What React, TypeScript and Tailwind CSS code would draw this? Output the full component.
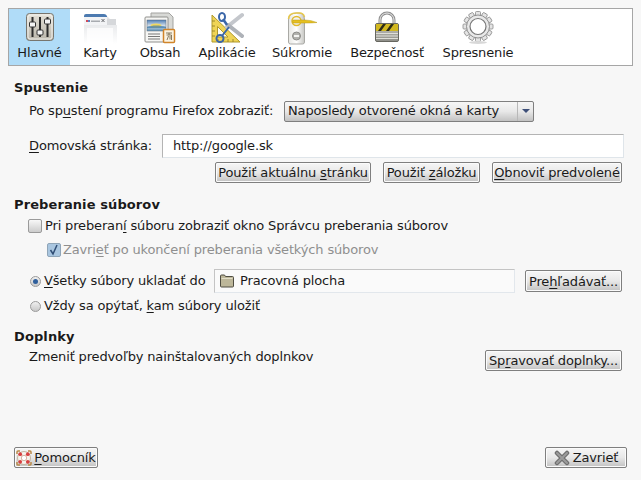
import React from 'react';

const btn =
  'flex items-center justify-center whitespace-nowrap rounded-[2px] border border-[#7f7f7f] bg-gradient-to-b from-[#f6f6f6] via-[#e8e8e8] to-[#c2c2c2] text-[13px] leading-none text-[#1a1a1a] shadow-[inset_0_0_0_1px_#fbfbfb]';

function MainIcon() {
  return (
    <svg width="32" height="32" viewBox="0 0 32 32">
      <defs>
        <linearGradient id="mainBg" x1="0" y1="0" x2="0" y2="1">
          <stop offset="0" stopColor="#e4e1d8" />
          <stop offset="1" stopColor="#b9b5aa" />
        </linearGradient>
      </defs>
      <rect x="2.500" y="1.500" width="27" height="27" rx="3" fill="url(#mainBg)" stroke="#77756e" />
      <rect x="4" y="3" width="24" height="24" rx="2" fill="none" stroke="#f3f2ee" />
      <path d="M8.500 5v20M16 5v20M23.500 5v20" stroke="#2b2b2b" strokeWidth="2" />
      <rect x="5.500" y="10" width="6" height="5" rx="1" fill="#f4f4f4" stroke="#333" />
      <rect x="13" y="18" width="6" height="5" rx="1" fill="#f4f4f4" stroke="#333" />
      <rect x="20.500" y="7" width="6" height="5" rx="1" fill="#f4f4f4" stroke="#333" />
    </svg>
  );
}

function TabsIcon() {
  return (
    <svg width="34" height="32" viewBox="0 0 34 32">
      <defs>
        <linearGradient id="tabFade" x1="0" y1="0" x2="0" y2="1">
          <stop offset="0" stopColor="#dfe1e4" />
          <stop offset="1" stopColor="#ffffff" />
        </linearGradient>
      </defs>
      <path d="M1 32V4h23l3 3v6h7v19z" fill="url(#tabFade)" />
      <path d="M1 4q0-2 2-2h18q2 0 3 2v1H1z" fill="#4c7ab0" />
      <rect x="1" y="5" width="23" height="8" fill="#f2f3f5" />
      <rect x="3" y="8" width="2" height="2" fill="#d04a5a" />
      <rect x="5" y="8" width="2" height="2" fill="#5a7fc0" />
      <rect x="8" y="8.500" width="9" height="1.500" fill="#a8abb0" />
      <path d="M18.500 7l3 3M21.500 7l-3 3" stroke="#66686c" strokeWidth="1" />
      <rect x="24" y="7" width="9" height="6" fill="#d6d8db" />
      <rect x="4" y="16" width="26" height="16" fill="#ffffff" opacity="0.75" />
    </svg>
  );
}

function ContentIcon() {
  return (
    <svg width="34" height="32" viewBox="0 0 34 32">
      <defs>
        <linearGradient id="sky" x1="0" y1="0" x2="0" y2="1">
          <stop offset="0" stopColor="#4d7fb8" />
          <stop offset="0.5" stopColor="#cfdbe6" />
          <stop offset="1" stopColor="#5f93b8" />
        </linearGradient>
      </defs>
      <path d="M8 1h18l4 4v21H8z" fill="#d8d9d6" stroke="#a3a3a0" />
      <rect x="2" y="5" width="23" height="25" rx="1" fill="#f6f6f4" stroke="#8f8f8c" />
      <rect x="4" y="8" width="19" height="11" fill="url(#sky)" stroke="#5f6a75" strokeWidth="0.500" />
      <ellipse cx="13" cy="13.500" rx="5.500" ry="2" fill="#f0d860" />
      <path d="M4 15c5-2 13-2 19 0v1H4z" fill="#3f79a8" opacity="0.7" />
      <path d="M5 22h12M5 24.500h12M5 27h12" stroke="#777" strokeWidth="1" />
      <rect x="20.500" y="17.500" width="11" height="13" rx="1" fill="#fbf3e2" stroke="#d0842a" strokeWidth="1.500" />
      <path d="M23 21h6M26 21v2M23.500 23h5v5M25.500 24l-1.500 4M27 24v3.500" stroke="#6a5a40" strokeWidth="0.800" fill="none" />
    </svg>
  );
}

function AppsIcon() {
  return (
    <svg width="34" height="32" viewBox="0 0 34 32">
      <path d="M2 3L2 30L30 30z" fill="#efd456" stroke="#b09a2c" strokeLinejoin="round" />
      <path d="M7.500 14.500L7.500 25L18 25z" fill="#fdfdf5" stroke="#b09a2c" />
      <path d="M2 9h3M2 14h3M2 19h3M2 24h3M8 30v-3M13 30v-3M18 30v-3M23 30v-3" stroke="#8a7a25" strokeWidth="0.800" />
      <path d="M17 15L32 3" stroke="#c4c7cc" strokeWidth="4" strokeLinecap="round" />
      <path d="M18 13L32 24" stroke="#aeb2b8" strokeWidth="4" strokeLinecap="round" />
      <path d="M19 15L12 24" stroke="#3a66a8" strokeWidth="2" />
      <path d="M17 13L13 7" stroke="#3a66a8" strokeWidth="2.500" />
      <ellipse cx="12" cy="5" rx="3" ry="4" fill="none" stroke="#3a66a8" strokeWidth="2" />
      <circle cx="10" cy="26.500" r="3.500" fill="none" stroke="#3a66a8" strokeWidth="2" />
    </svg>
  );
}

function PrivacyIcon() {
  return (
    <svg width="32" height="34" viewBox="0 0 32 34">
      <defs>
        <linearGradient id="hanger" x1="0" y1="0" x2="1" y2="0">
          <stop offset="0" stopColor="#e6e6e2" />
          <stop offset="0.5" stopColor="#ffffff" />
          <stop offset="1" stopColor="#c6c6c2" />
        </linearGradient>
      </defs>
      <path d="M2.500 9q0-7 8-7h2q6 0 6 7v22q0 2-2 2h-12q-2 0-2-2z" fill="url(#hanger)" stroke="#a9a9a5" />
      <circle cx="10.500" cy="10" r="4.500" fill="#f3f3f1" stroke="#e0b92c" strokeWidth="1.500" />
      <path d="M2.500 8q0-6 8-6h3q4 0 5 4" fill="none" stroke="#e8c84a" strokeWidth="1.500" />
      <path d="M7 9h12q6 0 12 2.500-5 .5-11 .5H7q-1-1.500 0-3z" fill="#e6c020" stroke="#b89a18" strokeWidth="0.500" />
      <circle cx="10.500" cy="25" r="4" fill="#b2b2ae" stroke="#8c8c88" />
      <rect x="8" y="24" width="5" height="2" fill="#f4f4f2" />
    </svg>
  );
}

function SecurityIcon() {
  return (
    <svg width="32" height="34" viewBox="0 0 32 34">
      <defs>
        <linearGradient id="lockBody" x1="0" y1="0" x2="0" y2="1">
          <stop offset="0" stopColor="#c7c7c0" />
          <stop offset="1" stopColor="#8e8e88" />
        </linearGradient>
      </defs>
      <path d="M9 14V9a7 7 0 0 1 14 0v5" fill="none" stroke="#8d8d8d" strokeWidth="3" />
      <path d="M9 14V9a7 7 0 0 1 14 0v5" fill="none" stroke="#e8e8e8" strokeWidth="1" />
      <rect x="4.500" y="12.500" width="23" height="18" rx="1.500" fill="url(#lockBody)" stroke="#66665f" />
      <rect x="5" y="13" width="22" height="7" fill="#d2b820" />
      <path d="M7 20l5-7h3l-5 7zM15 20l5-7h3l-5 7z" fill="#2e2c18" />
      <path d="M5 22.500h22M5 25h22M5 27.500h22" stroke="#e6e6e0" strokeWidth="0.900" />
    </svg>
  );
}

function AdvancedIcon() {
  const teeth = Array.from({ length: 12 }, (_, i) => i * 30);
  return (
    <svg width="32" height="34" viewBox="0 0 32 34">
      <g>
        {teeth.map((a) => (
          <rect key={a} x="13.500" y="0.500" width="5" height="6" rx="1" fill="#e4e4e4" stroke="#8a8a8a" strokeWidth="0.800" transform={`rotate(${a} 16 15.500)`} />
        ))}
      </g>
      <circle cx="16" cy="15.500" r="11.500" fill="#e8e8e8" stroke="#8f8f8f" />
      <circle cx="16" cy="15.500" r="8" fill="#ffffff" stroke="#777" strokeWidth="1.200" />
      <ellipse cx="16" cy="31.500" rx="9" ry="1.500" fill="#d8d8d8" />
    </svg>
  );
}

function Tab({ label, icon, active, width }: { label: string; icon: React.ReactNode; active?: boolean; width: string }) {
  return (
    <div className={`flex h-[56px] flex-col items-center justify-between pb-[4px] pt-[2px] ${width} ${active ? 'bg-[#b0dcf8]' : ''}`}>
      <div className="flex h-[34px] items-center justify-center">{icon}</div>
      <span className="text-[13px] leading-[16px] text-[#1a1a1a]">{label}</span>
    </div>
  );
}

function Key({ children }: { children: React.ReactNode }) {
  return <span className="underline underline-offset-2">{children}</span>;
}

function Checkbox({ checked }: { checked?: boolean }) {
  if (checked) {
    return (
      <svg width="14" height="14" viewBox="0 0 14 14" className="shrink-0">
        <rect x="0.500" y="0.500" width="13" height="13" rx="1.500" fill="#a9c6e0" stroke="#8fa5b8" />
        <path d="M3.500 7l2.500 4 4-9" fill="none" stroke="#2f4d74" strokeWidth="1.500" />
      </svg>
    );
  }
  return <div className="h-[14px] w-[14px] shrink-0 rounded-[2px] border border-[#9a9a9a] bg-gradient-to-b from-[#f8f8f8] to-[#cccccc]" />;
}

function Radio({ checked }: { checked?: boolean }) {
  return (
    <div className="flex h-[11px] w-[11px] shrink-0 items-center justify-center rounded-full border border-[#9a9a9a] bg-gradient-to-b from-[#f0f0f0] to-[#c8c8c8]">
      {checked && <div className="h-[5px] w-[5px] rounded-full bg-[#2f5f9c]" />}
    </div>
  );
}

function Folder() {
  return (
    <svg width="16" height="16" viewBox="0 0 16 16" className="shrink-0">
      <path d="M1.500 3q0-1 1-1h3l1 1.500h7q1 0 1 1v8.500q0 1-1 1h-11q-1 0-1-1z" fill="#bdb79a" stroke="#4f4d42" />
      <path d="M2.500 5.500h11" stroke="#e2dec8" />
    </svg>
  );
}

function Lifebuoy() {
  return (
    <svg width="16" height="16" viewBox="0 0 16 16" className="shrink-0">
      <path d="M1 4V2q0-1 1-1h2M12 1h2q1 0 1 1v2M15 12v2q0 1-1 1h-2M4 15H2q-1 0-1-1v-2" fill="none" stroke="#b98a4a" strokeWidth="1.500" />
      <circle cx="8" cy="8" r="6.500" fill="#f6f2ec" stroke="#b9a78e" strokeWidth="0.800" />
      <circle cx="8" cy="8" r="2.700" fill="#ffffff" stroke="#c9a08a" strokeWidth="0.800" />
      <circle cx="4.200" cy="4.200" r="1.900" fill="#d84040" />
      <circle cx="11.800" cy="4.200" r="1.900" fill="#d84040" />
      <circle cx="4.200" cy="11.800" r="1.900" fill="#d84040" />
      <circle cx="11.800" cy="11.800" r="1.900" fill="#d84040" />
    </svg>
  );
}

function CloseIcon() {
  return (
    <svg width="16" height="16" viewBox="0 0 16 16" className="shrink-0">
      <path d="M3 3l10 10M13 3L3 13" stroke="#6f6f6f" strokeWidth="4.500" strokeLinecap="round" />
      <path d="M3 3l10 10M13 3L3 13" stroke="#9c9c9c" strokeWidth="2" strokeLinecap="round" />
    </svg>
  );
}

export default function App() {
  return (
    <div className="flex h-[480px] w-[641px] flex-col bg-[#f7f7f7] pt-[8px] text-[13px] tracking-[-0.15px] text-[#1a1a1a] [font-family:'DejaVu_Sans',sans-serif]">
      {/* Toolbar */}
      <div className="mx-[8px] flex h-[58px] items-stretch border border-[#a6a6a6] bg-white">
        <Tab label="Hlavné" icon={<MainIcon />} active width="w-[61px]" />
        <Tab label="Karty" icon={<TabsIcon />} width="w-[60px]" />
        <Tab label="Obsah" icon={<ContentIcon />} width="w-[60px]" />
        <Tab label="Aplikácie" icon={<AppsIcon />} width="w-[74px]" />
        <Tab label="Súkromie" icon={<PrivacyIcon />} width="w-[76px]" />
        <Tab label="Bezpečnosť" icon={<SecurityIcon />} width="w-[94px]" />
        <Tab label="Spresnenie" icon={<AdvancedIcon />} width="w-[88px]" />
      </div>

      <div className="flex flex-1 flex-col px-[14px] pt-[14px]">
        {/* Spustenie */}
        <div className="text-[13px] font-bold leading-[16px] tracking-[0.1px]">Spustenie</div>
        <div className="mt-[4px] flex h-[22px] items-center pl-[15px]">
          <span className="w-[255px]">Po sp<Key>u</Key>stení programu Firefox zobraziť:</span>
          <div className="flex h-[21px] w-[250px] items-center justify-between rounded-[2px] border border-[#7f7f7f] bg-gradient-to-b from-[#f6f6f6] via-[#e8e8e8] to-[#c2c2c2] pl-[3px]">
            <span>Naposledy otvorené okná a karty</span>
            <div className="flex h-full w-[16px] items-center justify-center border-l border-[#b8b8b8]">
              <div className="h-0 w-0 border-x-[4px] border-t-[4px] border-x-transparent border-t-[#3d4f78]" />
            </div>
          </div>
        </div>
        <div className="mt-[12px] flex h-[24px] items-center pl-[15px]">
          <span className="w-[133px]"><Key>D</Key>omovská stránka:</span>
          <div className="flex h-[24px] w-[462px] items-center border border-[#b4b4b4] border-b-[#dfe5ea] border-r-[#dfe5ea] bg-white pl-[10px]">http://google.sk</div>
        </div>
        <div className="mt-[4px] flex justify-end gap-[12px] pr-[5px]">
          <div className={`${btn} h-[21px] w-[156px]`}><span>Použiť aktuálnu <Key>s</Key>tránku</span></div>
          <div className={`${btn} h-[21px] w-[97px]`}><span>Použiť <Key>z</Key>áložku</span></div>
          <div className={`${btn} h-[21px] w-[130px]`}><span><Key>O</Key>bnoviť predvolené</span></div>
        </div>

        {/* Preberanie suborov */}
        <div className="mt-[14px] text-[13px] font-bold leading-[16px] tracking-[0.1px]">Preberanie súborov</div>
        <div className="mt-[4px] flex h-[18px] items-center gap-[3px] pl-[14px]">
          <Checkbox />
          <span>Pri preberan<Key>í</Key> súboru zobraziť okno Správcu preberania súborov</span>
        </div>
        <div className="mt-[6px] flex h-[18px] items-center gap-[2px] pl-[33px] text-[#8f8f8f]">
          <Checkbox checked />
          <span>Zavri<Key>e</Key>ť po ukončení preberania všetkých súborov</span>
        </div>
        <div className="mt-[10px] flex h-[24px] items-center pl-[16px]">
          <Radio checked />
          <span className="ml-[3px] w-[170px]"><Key>V</Key>šetky súbory ukladať do</span>
          <div className="flex h-[24px] w-[301px] items-center gap-[5px] border border-[#c4c4c4] border-b-[#e2e7ec] border-r-[#e2e7ec] bg-[#fafafa] pl-[4px]">
            <Folder />
            <span>Pracovná plocha</span>
          </div>
          <div className={`${btn} ml-[10px] h-[22px] w-[97px]`}><span>Pre<Key>h</Key>ľadávať...</span></div>
        </div>
        <div className="mt-[2px] flex h-[22px] items-center pl-[16px]">
          <Radio />
          <span className="ml-[3px]">Vždy sa opýtať, <Key>k</Key>am súbory uložiť</span>
        </div>

        {/* Doplnky */}
        <div className="mt-[12px] text-[13px] font-bold leading-[16px] tracking-[0.1px]">Doplnky</div>
        <div className="mt-[5px] flex items-start justify-between pl-[15px] pr-[5px]">
          <span className="-mt-[1px] leading-[16px]">Zmeniť predvoľby nainštalovaných doplnkov</span>
          <div className={`${btn} h-[21px] w-[137px]`}><span>Sp<Key>r</Key>avovať doplnky...</span></div>
        </div>

        {/* Footer */}
        <div className="mb-[12px] mt-auto flex justify-between">
          <div className={`${btn} h-[21px] w-[84px] gap-[2px]`}>
            <Lifebuoy />
            <span><Key>P</Key>omocník</span>
          </div>
          <div className={`${btn} h-[21px] w-[82px] gap-[3px]`}>
            <CloseIcon />
            <span>Zavrieť</span>
          </div>
        </div>
      </div>
    </div>
  );
}
